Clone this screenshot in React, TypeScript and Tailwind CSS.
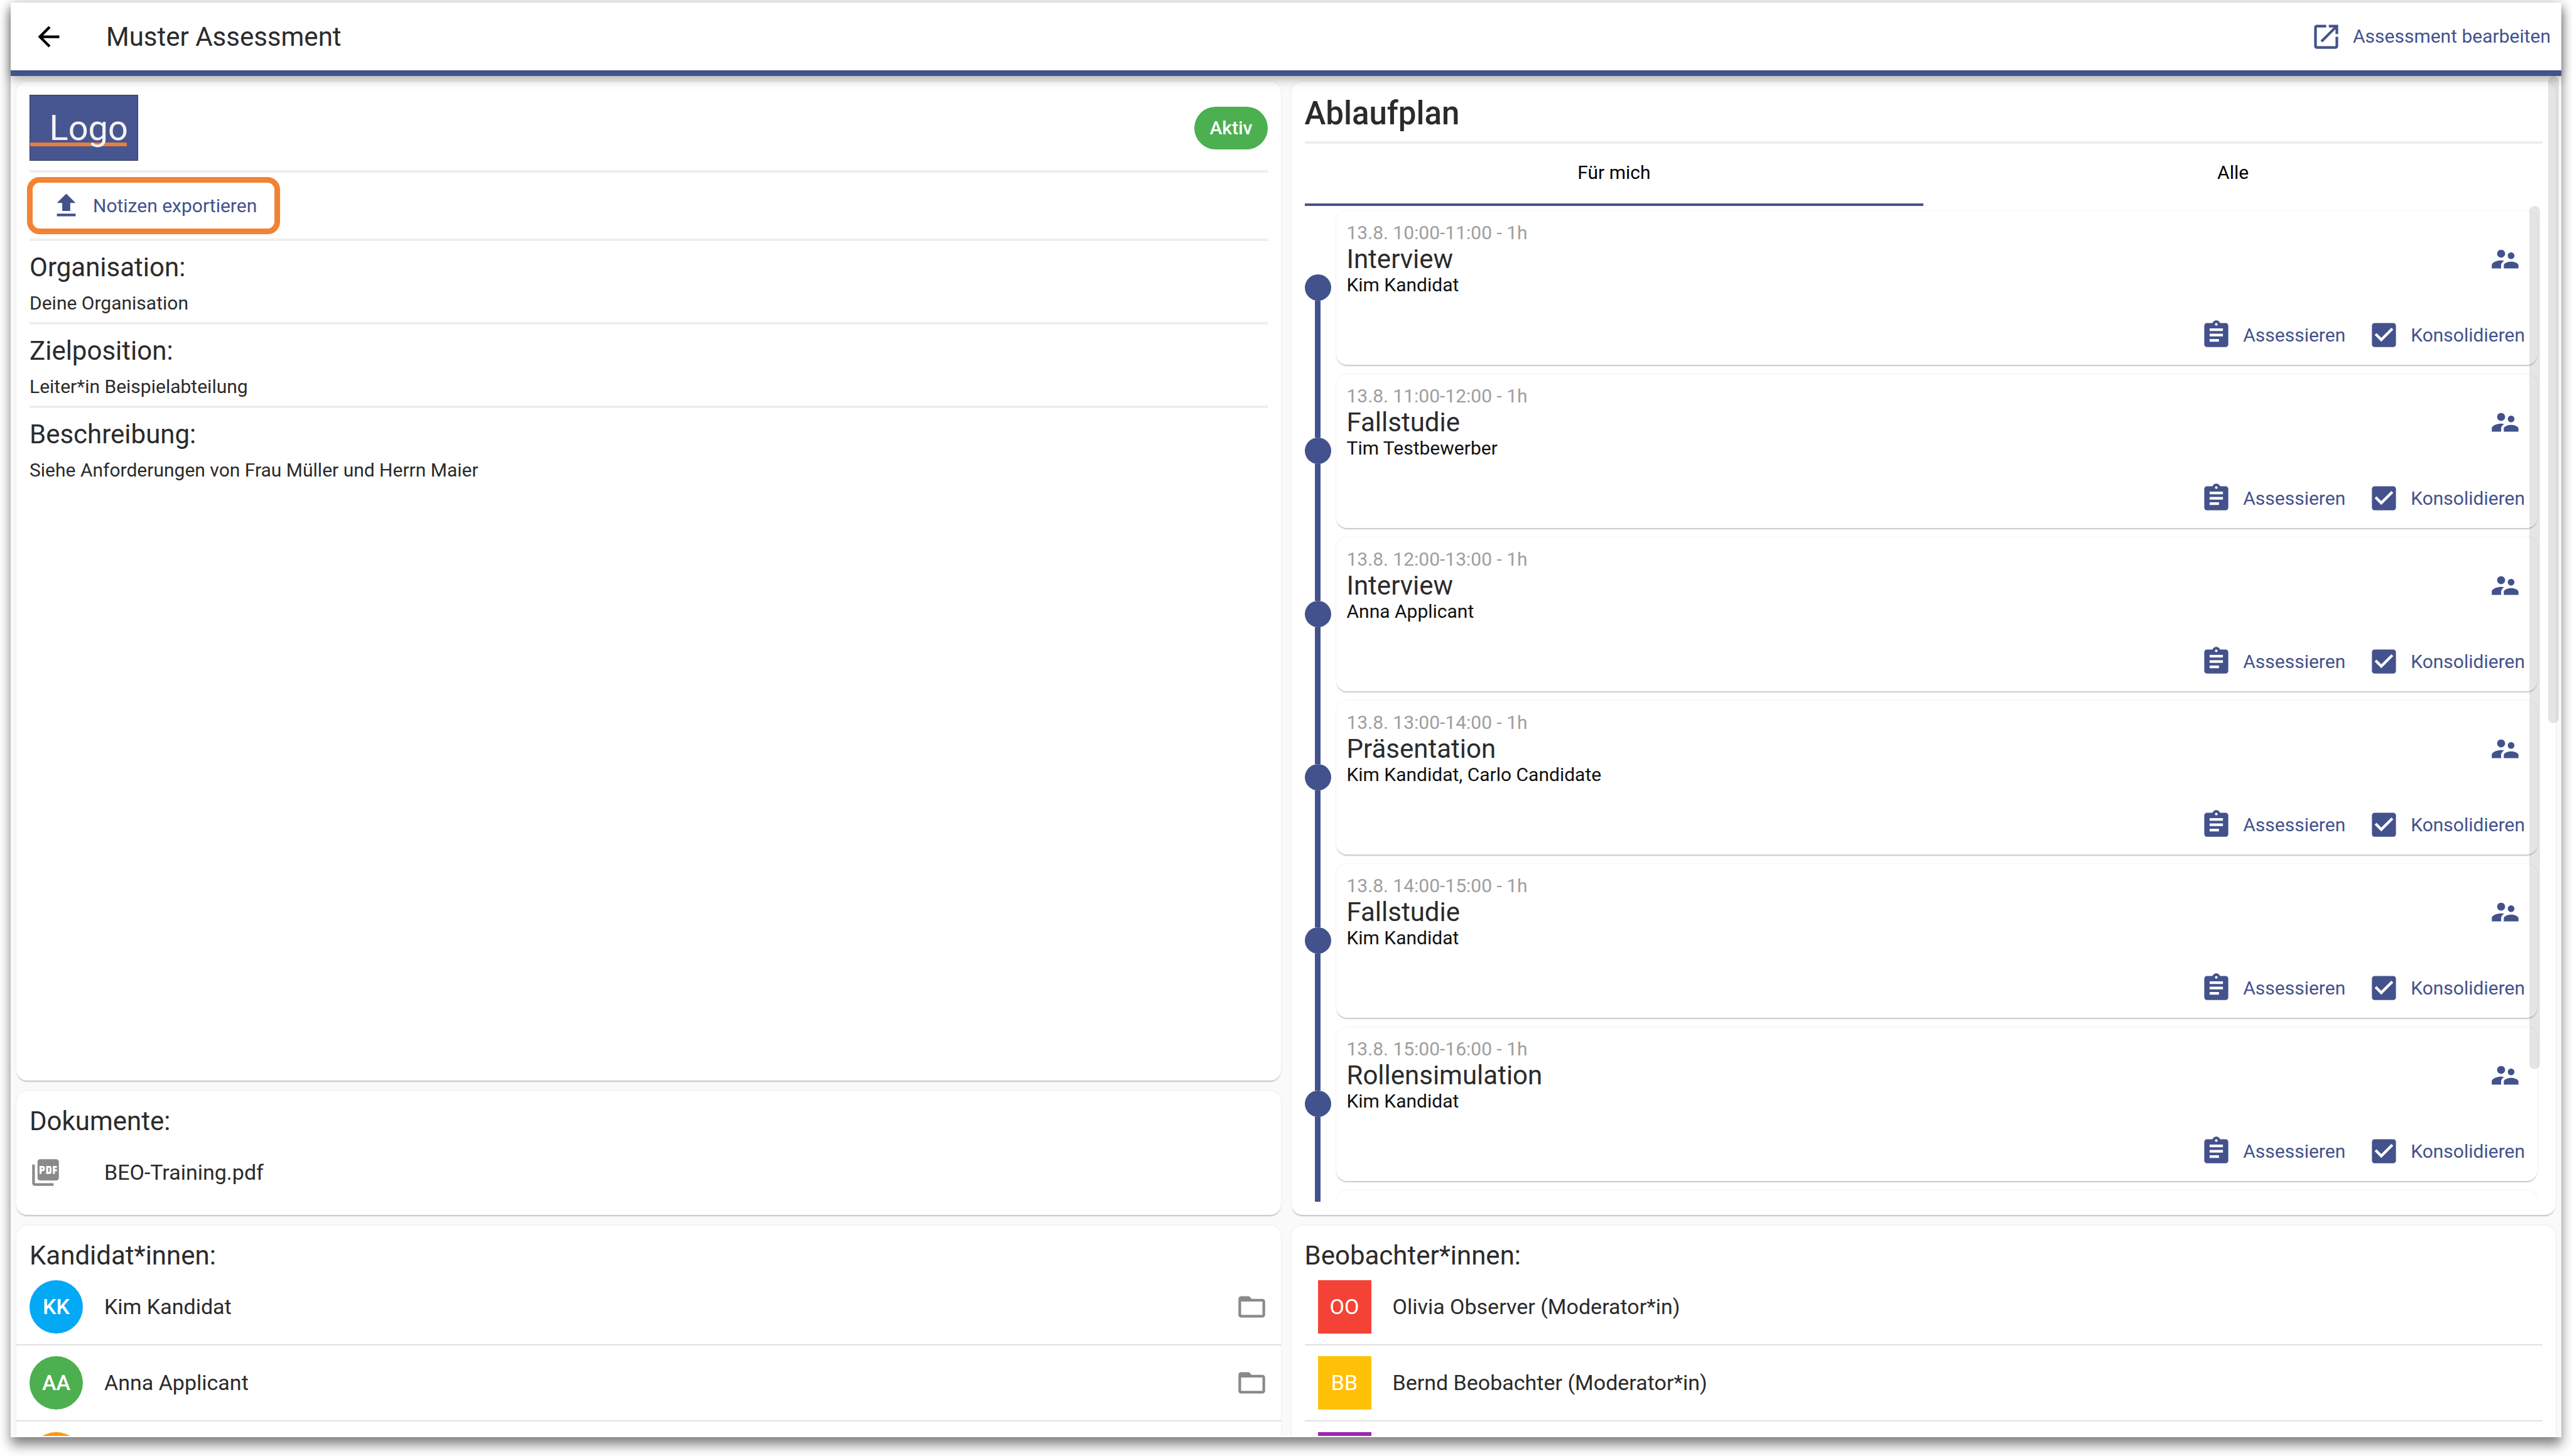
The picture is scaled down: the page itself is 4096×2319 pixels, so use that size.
import React from "react";

const ICONS = {
  back: "M20 11H7.83l5.59-5.59L12 4l-8 8 8 8 1.41-1.41L7.83 13H20v-2z",
  open: "M19 19H5V5h7V3H5c-1.11 0-2 .9-2 2v14c0 1.1.89 2 2 2h14c1.1 0 2-.9 2-2v-7h-2v7zM14 3v2h3.59l-9.83 9.83 1.41 1.41L19 6.41V10h2V3h-7z",
  upload: "M5 20h14v-2H5v2zm0-10h4v6h6v-6h4l-7-7-7 7z",
  people:
    "M16.5 12c1.38 0 2.49-1.12 2.49-2.5S17.88 7 16.5 7C15.12 7 14 8.12 14 9.5s1.12 2.5 2.5 2.5zM9 11c1.66 0 2.99-1.34 2.99-3S10.66 5 9 5C7.34 5 6 6.34 6 8s1.34 3 3 3zm7.5 3c-1.83 0-5.5.92-5.5 2.75V19h11v-2.25c0-1.83-3.67-2.75-5.5-2.75zM9 13c-2.33 0-7 1.17-7 3.5V19h7v-2.25c0-.85.33-2.34 2.37-3.47C10.5 13.1 9.66 13 9 13z",
  clipboard:
    "M19 3h-4.18C14.4 1.84 13.3 1 12 1c-1.3 0-2.4.84-2.82 2H5c-1.1 0-2 .9-2 2v14c0 1.1.9 2 2 2h14c1.1 0 2-.9 2-2V5c0-1.1-.9-2-2-2zm-7 0c.55 0 1 .45 1 1s-.45 1-1 1-1-.45-1-1 .45-1 1-1zm2 14H7v-2h7v2zm3-4H7v-2h10v2zm0-4H7V7h10v2z",
  check:
    "M19 3H5c-1.11 0-2 .9-2 2v14c0 1.1.89 2 2 2h14c1.11 0 2-.9 2-2V5c0-1.1-.89-2-2-2zm-9 14l-5-5 1.41-1.41L10 14.17l7.59-7.59L19 8l-9 9z",
  pdf: "M20 2H8c-1.1 0-2 .9-2 2v12c0 1.1.9 2 2 2h12c1.1 0 2-.9 2-2V4c0-1.1-.9-2-2-2zm-8.5 7.5c0 .83-.67 1.5-1.5 1.5H9v2H7.5V7H10c.83 0 1.5.67 1.5 1.5v1zm5 2c0 .83-.67 1.5-1.5 1.5h-2.5V7H15c.83 0 1.5.67 1.5 1.5v3zm4-3H19v1h1.5V11H19v2h-1.5V7h3v1.5zM9 9.5h1v-1H9v1zM4 6H2v14c0 1.1.9 2 2 2h14v-2H4V6zm10 5.5h1v-3h-1v3z",
  folder:
    "M20 6h-8l-2-2H4c-1.1 0-1.99.9-1.99 2L2 18c0 1.1.9 2 2 2h16c1.1 0 2-.9 2-2V8c0-1.1-.9-2-2-2zm0 12H4V8h16v10z",
};

function Icon({ name }: { name: keyof typeof ICONS }) {
  return (
    <svg viewBox="0 0 24 24" fill="currentColor" aria-hidden="true" className="size-[51px] shrink-0">
      <path d={ICONS[name]} />
    </svg>
  );
}

function Card({ className, children }: { className: string; children: React.ReactNode }) {
  return (
    <section
      className={`rounded-[17px] bg-white shadow-[0_3px_2px_-1px_rgba(0,0,0,0.2),0_0_3px_rgba(0,0,0,0.1)] ${className}`}
    >
      {children}
    </section>
  );
}

function Divider() {
  return <hr className="h-1 w-full shrink-0 border-0 bg-[#eeeeee]" />;
}

function Heading({ children }: { children: React.ReactNode }) {
  return <h2 className="text-[42px] leading-[68px]">{children}</h2>;
}

function Detail({ title, text }: { title: string; text: string }) {
  return (
    <div className="pt-2 pb-[9px]">
      <Heading>{title}</Heading>
      <p className="mt-0.5 text-[30px] leading-[42px]">{text}</p>
    </div>
  );
}

const APPOINTMENTS = [
  { time: "13.8. 10:00-11:00 - 1h", title: "Interview", who: "Kim Kandidat" },
  { time: "13.8. 11:00-12:00 - 1h", title: "Fallstudie", who: "Tim Testbewerber" },
  { time: "13.8. 12:00-13:00 - 1h", title: "Interview", who: "Anna Applicant" },
  { time: "13.8. 13:00-14:00 - 1h", title: "Präsentation", who: "Kim Kandidat, Carlo Candidate" },
  { time: "13.8. 14:00-15:00 - 1h", title: "Fallstudie", who: "Kim Kandidat" },
  { time: "13.8. 15:00-16:00 - 1h", title: "Rollensimulation", who: "Kim Kandidat" },
];

function Action({ icon, label }: { icon: keyof typeof ICONS; label: string }) {
  return (
    <button className="flex items-center gap-[17px] text-[30px] leading-[42px] text-[#43528c]">
      <Icon name={icon} />
      {label}
    </button>
  );
}

function TimelineItem({ time, title, who, first }: { time: string; title: string; who: string; first: boolean }) {
  return (
    <li className="flex shrink-0 gap-2">
      <div className="-mb-[15px] flex w-[42px] flex-col items-center">
        <div className={first ? "h-[101px] shrink-0" : "h-[101px] w-[9px] shrink-0 bg-[#43528c]"} />
        <div className="size-[42px] shrink-0 rounded-full bg-[#43528c]" />
        <div className="w-[9px] grow bg-[#43528c]" />
      </div>
      <Card className="flex h-[245px] grow flex-col justify-between pt-4 pr-5 pb-[22px] pl-[17px]">
        <div className="flex items-center justify-between">
          <div>
            <p className="text-[30px] leading-[38px] text-[#9e9e9e]">{time}</p>
            <h3 className="text-[42px] leading-[46px]">{title}</h3>
            <p className="text-[30px] leading-[36px] text-[#111111]">{who}</p>
          </div>
          <button aria-label="Teilnehmende" className="mr-1.5 text-[#43528c]">
            <Icon name="people" />
          </button>
        </div>
        <div className="flex justify-end gap-9">
          <Action icon="clipboard" label="Assessieren" />
          <Action icon="check" label="Konsolidieren" />
        </div>
      </Card>
    </li>
  );
}

function Candidate({ initials, name, color }: { initials?: string; name?: string; color: string }) {
  return (
    <li className="flex items-center border-b-2 border-[#e0e0e0] px-[21px] py-[17px] text-[34px]">
      <span className={`flex size-[85px] items-center justify-center rounded-full font-medium text-white ${color}`}>
        {initials}
      </span>
      <span className="ml-[34px] grow">{name}</span>
      <button aria-label="Ordner öffnen" className="text-[#8a8a8a]">
        <Icon name="folder" />
      </button>
    </li>
  );
}

function Observer({ initials, name, color }: { initials?: string; name?: string; color: string }) {
  return (
    <li className="flex items-center border-b-2 border-[#e0e0e0] px-[21px] py-[17px] text-[34px]">
      <span className={`flex size-[85px] items-center justify-center text-white ${color}`}>{initials}</span>
      <span className="ml-[34px] grow">{name}</span>
    </li>
  );
}

export default function App() {
  return (
    <div className="h-screen overflow-hidden bg-white px-[17px] pt-1 pb-[30px] font-[Roboto,sans-serif] text-[#2b2b2b]">
      <div className="relative flex h-full flex-col bg-[#fafafa] shadow-[0_12px_18px_rgba(0,0,0,0.5)]">
        <header className="relative z-10 flex h-[117px] shrink-0 items-center justify-between border-b-[9px] border-[#43528c] bg-white pr-[17px] pl-[35px] shadow-[0_4px_16px_rgba(0,0,0,0.35)]">
          <div className="flex items-center gap-[66px]">
            <button aria-label="Zurück" className="text-black">
              <Icon name="back" />
            </button>
            <h1 className="pt-0.5 text-[42px] leading-[50px]">Muster Assessment</h1>
          </div>
          <a href="#bearbeiten" className="flex items-center gap-[17px] text-[30px] leading-[42px] text-[#43528c]">
            <Icon name="open" />
            Assessment bearbeiten
          </a>
        </header>

        <main className="relative flex min-h-0 grow flex-col overflow-hidden">
          <div className="grid grid-cols-2 gap-[17px] px-[9px] pt-[9px]">
            <div className="flex h-[1805px] flex-col gap-[17px]">
              <Card className="flex grow flex-col px-[21px] pt-[21px]">
                <div className="flex items-center justify-between pb-[15px]">
                  <div className="relative flex h-[105px] w-[173px] items-center justify-end border border-[#2d3860] bg-[#475590] pr-[15px]">
                    <span className="absolute bottom-[22px] left-0 h-1.5 w-[154px] bg-[#e97f38]" />
                    <span className="relative text-[56px] leading-[60px] text-[#f3f3f3]">Logo</span>
                  </div>
                  <span className="rounded-full bg-[#4caf50] px-6 py-[13px] text-[30px] leading-[42px] font-medium text-white">
                    Aktiv
                  </span>
                </div>
                <Divider />
                <button className="my-[7px] -ml-1 flex h-[91px] items-center gap-[17px] self-start rounded-[20px] border-[9px] border-[#f28333] pr-7 pl-7 text-[30px] leading-[42px] text-[#43528c]">
                  <Icon name="upload" />
                  Notizen exportieren
                </button>
                <Divider />
                <Detail title="Organisation:" text="Deine Organisation" />
                <Divider />
                <Detail title="Zielposition:" text="Leiter*in Beispielabteilung" />
                <Divider />
                <Detail title="Beschreibung:" text="Siehe Anforderungen von Frau Müller und Herrn Maier" />
              </Card>
              <Card className="h-[197px] px-[21px] pt-3.5">
                <Heading>Dokumente:</Heading>
                <a href="#beo-training" className="mt-[22px] flex items-center gap-[68px] text-[34px] leading-[51px]">
                  <span className="text-[#8a8a8a]">
                    <Icon name="pdf" />
                  </span>
                  BEO-Training.pdf
                </a>
              </Card>
            </div>

            <Card className="flex h-[1805px] flex-col px-[21px]">
              <h2 className="pt-[21px] pb-3.5 text-[51px] leading-[60px] font-medium">Ablaufplan</h2>
              <Divider />
              <div role="tablist" className="grid shrink-0 grid-cols-2 text-[30px] leading-[42px] text-black">
                <button role="tab" aria-selected="true" className="h-[99px] border-b-4 border-[#43528c] pb-1">
                  Für mich
                </button>
                <button role="tab" aria-selected="false" className="h-[99px] border-b-4 border-transparent pb-1">
                  Alle
                </button>
              </div>
              <div className="relative h-[1586px] overflow-hidden">
                <ul className="flex flex-col gap-[15px] pt-2 pr-2">
                  {APPOINTMENTS.map((a, i) => (
                    <TimelineItem key={a.time} {...a} first={i === 0} />
                  ))}
                  <li className="flex shrink-0 gap-2">
                    <div className="flex w-[42px] justify-center">
                      <div className="w-[9px] bg-[#43528c]" />
                    </div>
                    <Card className="h-[245px] grow">{null}</Card>
                  </li>
                </ul>
                <div className="absolute top-0 right-1 h-[1375px] w-[17px] rounded-full bg-black/10" />
              </div>
            </Card>
          </div>

          <div className="grid grid-cols-2 gap-[17px] px-[9px] pt-[17px]">
            <Card className="pt-3.5">
              <div className="px-[21px]">
                <Heading>Kandidat*innen:</Heading>
              </div>
              <ul className="-mt-3">
                <Candidate initials="KK" name="Kim Kandidat" color="bg-[#03a9f4]" />
                <Candidate initials="AA" name="Anna Applicant" color="bg-[#4caf50]" />
                <Candidate color="bg-[#ff9800]" />
              </ul>
            </Card>
            <Card className="px-[21px] pt-3.5">
              <Heading>Beobachter*innen:</Heading>
              <ul className="-mt-3">
                <Observer initials="OO" name="Olivia Observer (Moderator*in)" color="bg-[#f44336]" />
                <Observer initials="BB" name="Bernd Beobachter (Moderator*in)" color="bg-[#ffc107]" />
                <Observer color="bg-[#9c27b0]" />
              </ul>
            </Card>
          </div>
          <div className="absolute top-0 right-1 h-[1031px] w-[17px] rounded-full bg-black/10" />
        </main>
        <div className="h-0.5 shrink-0 bg-white" />
      </div>
    </div>
  );
}
